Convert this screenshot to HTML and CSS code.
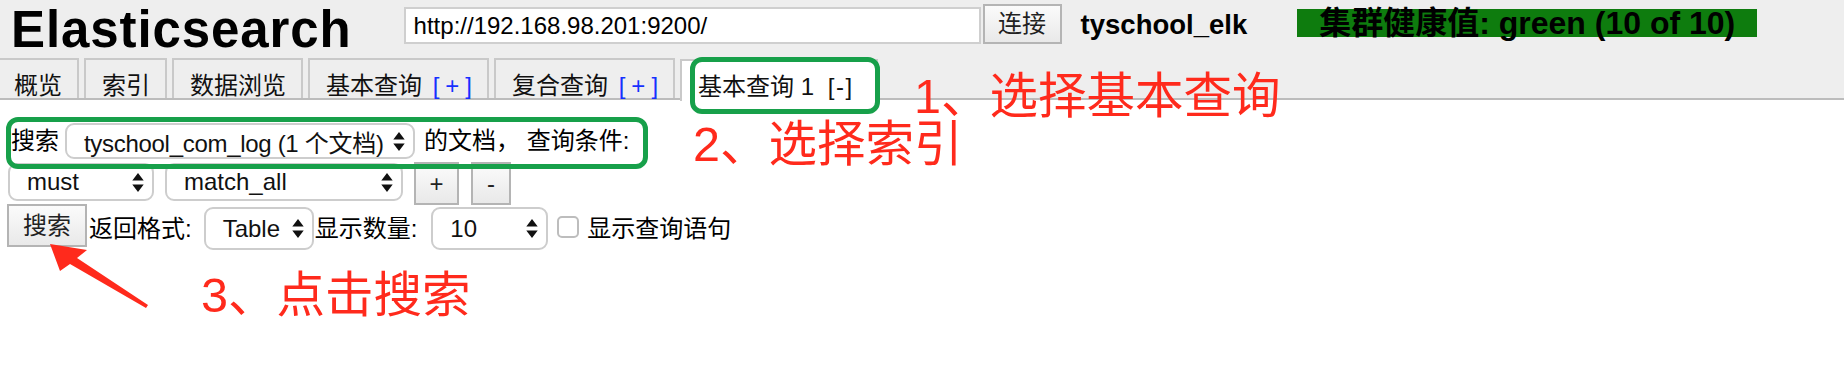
FILE: index.html
```html
<!DOCTYPE html>
<html lang="zh">
<head>
<meta charset="utf-8">
<title>Elasticsearch</title>
<link rel="stylesheet" href="styles.css">
</head>
<body>
<div class="page">
  <header class="header">
    <div class="topbar">
      <h1 class="logo">Elasticsearch</h1>
      <input class="url" type="text" value="http://192.168.98.201:9200/">
      <button class="btn connect">连接</button>
      <span class="cluster">tyschool_elk</span>
      <span class="health">集群健康值: green (10 of 10)</span>
    </div>
    <nav class="tabs">
      <div class="tab t1">概览</div>
      <div class="tab t2">索引</div>
      <div class="tab t3">数据浏览</div>
      <div class="tab t4">基本查询 <span class="plus">[+]</span></div>
      <div class="tab t5">复合查询 <span class="plus">[+]</span></div>
      <div class="tab active">基本查询 1 <span class="minus">[-]</span></div>
    </nav>
  </header>
  <main class="content">
    <div class="row row1">
      <span class="label">搜索</span>
      <div class="select sel-index"><span>tyschool_com_log (1 个文档)</span><svg class="arrows" viewBox="0 0 12 20"><path d="M6 0 L12 8 L0 8 Z M0 12 L12 12 L6 20 Z"/></svg></div>
      <span class="label after">的文档， 查询条件:</span>
    </div>
    <div class="row row2">
      <div class="select sel-must"><span>must</span><svg class="arrows" viewBox="0 0 12 20"><path d="M6 0 L12 8 L0 8 Z M0 12 L12 12 L6 20 Z"/></svg></div>
      <div class="select sel-match"><span>match_all</span><svg class="arrows" viewBox="0 0 12 20"><path d="M6 0 L12 8 L0 8 Z M0 12 L12 12 L6 20 Z"/></svg></div>
      <button class="btn sq add">+</button>
      <button class="btn sq del">-</button>
    </div>
    <div class="row row3">
      <button class="btn search">搜索</button>
      <span class="label fmt">返回格式:</span>
      <div class="select sel-table"><span>Table</span><svg class="arrows" viewBox="0 0 12 20"><path d="M6 0 L12 8 L0 8 Z M0 12 L12 12 L6 20 Z"/></svg></div>
      <span class="label cnt">显示数量:</span>
      <div class="select sel-size"><span>10</span><svg class="arrows" viewBox="0 0 12 20"><path d="M6 0 L12 8 L0 8 Z M0 12 L12 12 L6 20 Z"/></svg></div>
      <span class="check"></span>
      <span class="label show">显示查询语句</span>
    </div>
  </main>

  <div class="mark mark1"></div>
  <div class="mark mark2"></div>
  <div class="note note1">1、选择基本查询</div>
  <div class="note note2">2、选择索引</div>
  <div class="note note3">3、点击搜索</div>
  <svg class="arrow" width="200" height="368" viewBox="0 0 200 368">
    <path d="M50 244 L87 250 L77 258 L148 305 L146 308 L70 264 L60 271 Z" fill="#ff2a1c"/>
  </svg>
</div>
</body>
</html>
```

FILE: styles.css
```css
* { box-sizing: border-box; }
html, body { margin: 0; padding: 0; }
body {
  background: #ffffff;
  color: #000;
  font-family: "Liberation Sans", "Noto Sans CJK SC", sans-serif;
  font-size: 24px;
}
.page {
  position: relative;
  width: 1844px;
  height: 368px;
  overflow: hidden;
}
.header {
  background: #eeeeee;
  border-bottom: 2px solid #bcbcbc;
  height: 100px;
}
.topbar {
  display: flex;
  align-items: flex-start;
  height: 58px;
}
.logo {
  margin: 0 0 0 11px;
  font-size: 51px;
  letter-spacing: 0.9px;
  font-weight: bold;
  line-height: 59px;
  height: 58px;
}
.url {
  margin: 7px 0 0 52px;
  width: 577px;
  height: 37px;
  border: 2px solid #cfcfcf;
  background: #fff;
  padding: 0 8px;
  font-family: "Liberation Sans", sans-serif;
  font-size: 24px;
  color: #000;
  outline: none;
}
.btn {
  font-family: "Liberation Sans", "Noto Sans CJK SC", sans-serif;
  font-size: 24px;
  color: #222;
  border: 2px solid #b4b4b4;
  background: linear-gradient(#fbfbfb, #e9e9e9);
  border-radius: 0;
  padding: 0;
  line-height: 1;
}
.connect {
  margin: 4px 0 0 2px;
  width: 79px;
  height: 40px;
}
.cluster {
  margin: 0 0 0 19px;
  font-weight: bold;
  font-size: 27.5px;
  line-height: 50px;
}
.health {
  margin: 9px 0 0 50px;
  background: #0e7c0e;
  padding: 0 22px;
  font-weight: bold;
  font-size: 32px;
  height: 28px;
  line-height: 29px;
  color: #000;
}
.tabs {
  display: flex;
  gap: 5px;
  margin-left: -4px;
  height: 40px;
}
.tab {
  height: 40px;
  border: 2px solid #c9c9c9;
  border-bottom: 0;
  padding: 7px 15px 0 16px;
  line-height: 38px;
  white-space: nowrap;
  color: #111;
}
.plus { color: #1530ff; letter-spacing: 6px; margin: 0 -6px 0 4px; }
.minus { letter-spacing: 1.5px; margin-left: 7px; }
.tab.active {
  background: #fff;
  height: 42px;
  margin-top: 1px;
  padding-right: 22px;
}
.content {
  padding-top: 23px;
}
.row {
  display: flex;
  align-items: flex-start;
  white-space: nowrap;
}
.label { line-height: 35px; }
.row1 { padding-left: 11px; height: 35px; }
.row1 .label.after { margin-left: 9px; }
.select {
  display: flex;
  align-items: center;
  justify-content: space-between;
  background: #fff;
  border: 2px solid #cdcdcd;
  border-radius: 9px;
  padding: 0 8px 0 17px;
  color: #111;
}
.arrows { width: 12px; height: 19px; fill: #111; flex: none; }
.sel-index { margin-left: 6px; width: 350px; height: 36px; letter-spacing: -0.3px; }
.row2 { margin-top: 4px; padding-left: 8px; height: 43px; }
.sel-must { width: 146px; height: 38px; margin-top: 1px; }
.sel-match { width: 238px; height: 38px; margin: 1px 0 0 11px; }
.sq { width: 45px; height: 43px; margin-left: 11px; }
.del { width: 40px; margin-left: 12px; }
.row3 { margin-top: -1px; padding-left: 7px; height: 46px; }
.search { width: 80px; height: 43px; }
.row3 .label { line-height: 43px; margin-top: 3px; }
.fmt { margin-left: 2px; }
.sel-table { width: 110px; height: 43px; margin: 3px 0 0 12px; }
.cnt { margin-left: 1px; }
.sel-size { width: 117px; height: 43px; margin: 3px 0 0 14px; }
.check {
  width: 22px; height: 22px;
  border: 2px solid #bdbdbd;
  border-radius: 5px;
  background: #fff;
  margin: 12px 0 0 9px;
}
.show { margin-left: 8px; }

.mark {
  position: absolute;
  border: 5px solid #17a04a;
  border-radius: 12px;
}
.mark1 { left: 690px; top: 57px; width: 190px; height: 57px; }
.mark2 { left: 6px; top: 117px; width: 642px; height: 52px; }
.note {
  position: absolute;
  color: #ff2a1c;
  font-size: 48.5px;
  line-height: 1;
  white-space: nowrap;
}
.note1 { left: 914px; top: 72px; }
.note2 { left: 693px; top: 120px; }
.note3 { left: 201px; top: 271px; }
.arrow { position: absolute; left: 0; top: 0; }
```
